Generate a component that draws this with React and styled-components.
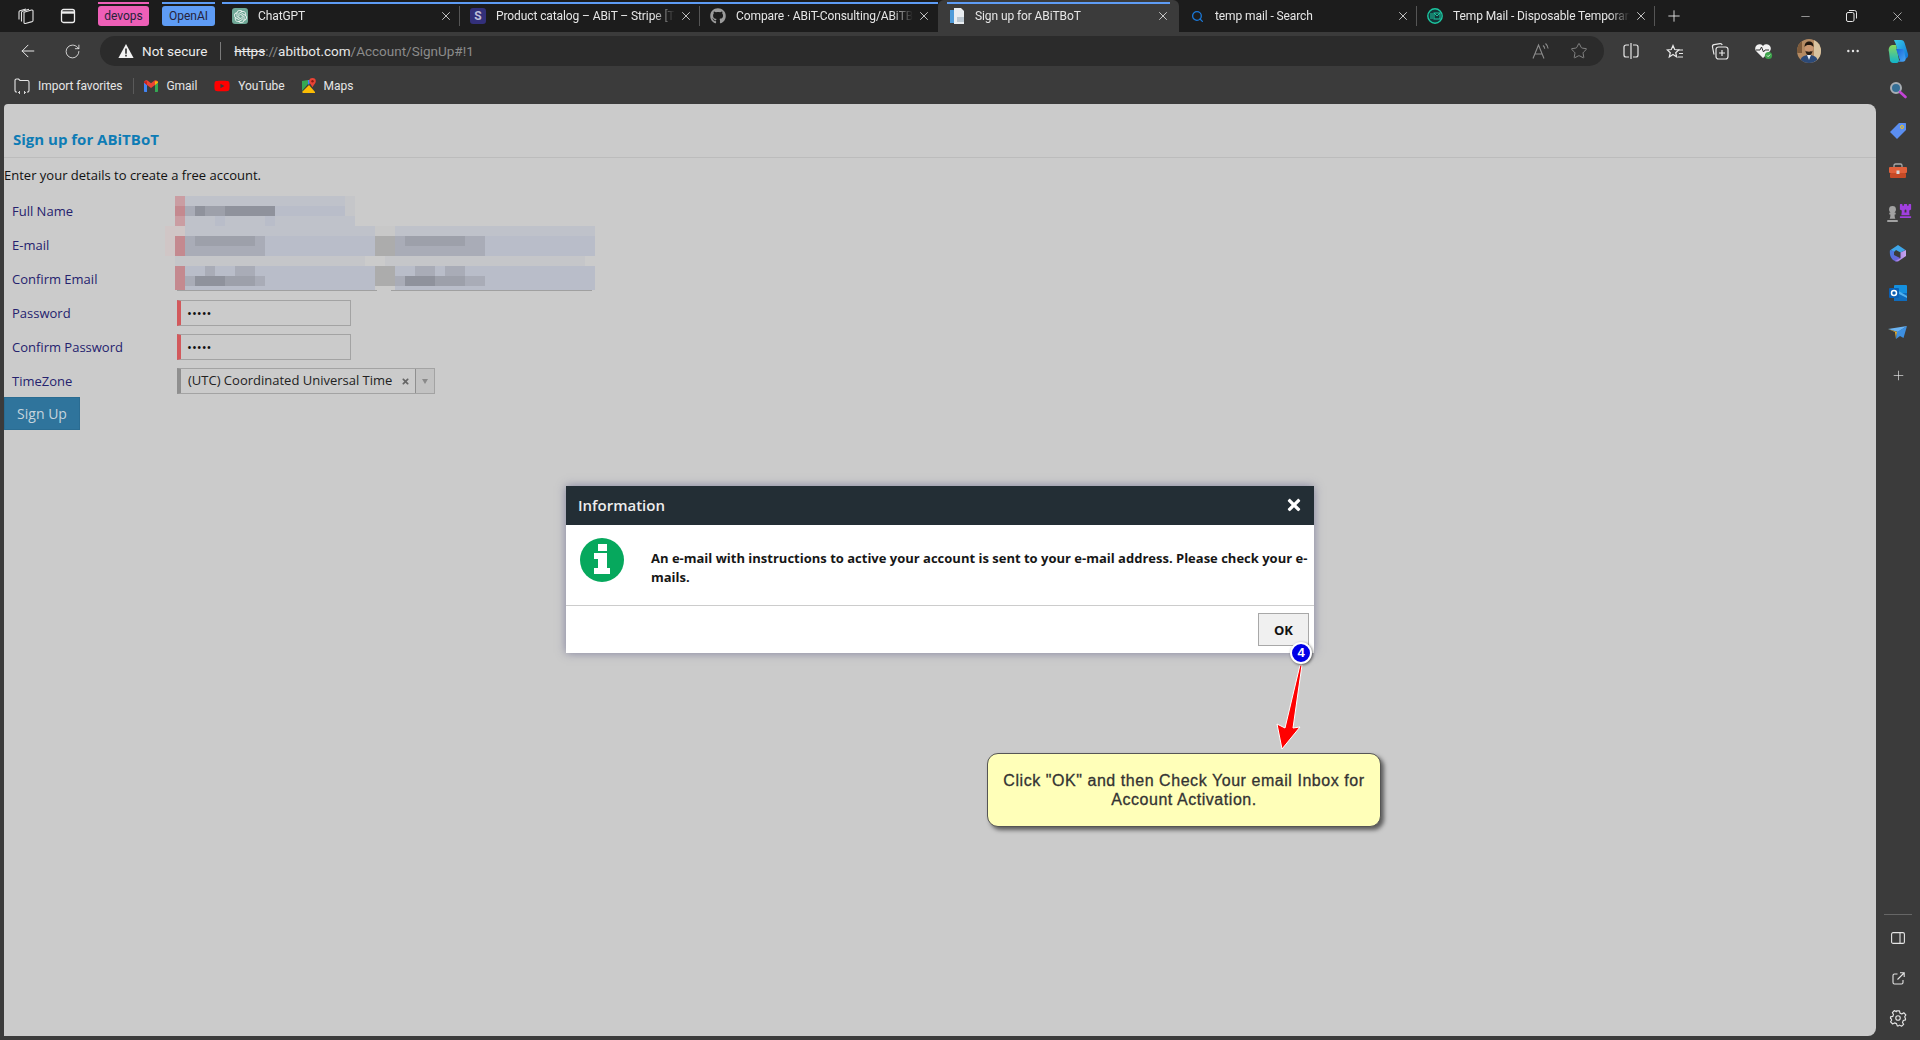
import React from 'react';
import styled, { createGlobalStyle } from 'styled-components';
import { ArrowLeft, RotateCw, Minus, Plus, X, Star, Search, MoreHorizontal } from 'lucide-react';
import { FaGithub, FaTimes, FaChessPawn, FaChessRook, FaYoutube } from 'react-icons/fa';
import { SiOpenai } from 'react-icons/si';

const GlobalStyle = createGlobalStyle`
  html, body { margin: 0; padding: 0; height: 100%; overflow: hidden; background: #3b3b3b; }
  #root { height: 100%; }
  * { box-sizing: border-box; }
`;

const Browser = styled.div`
  height: 1040px;
  display: flex;
  flex-direction: column;
  font-family: Roboto, "Liberation Sans", sans-serif;
  color: #e6e6e6;
  background: #3b3b3b;
`;

/* tab strip */
const TabStrip = styled.div`
  height: 32px;
  display: flex;
  background: #1c1c1c;
  flex-shrink: 0;
`;
const StripIcon = styled.div`
  width: ${p => p.$w}px;
  display: flex;
  align-items: center;
  justify-content: center;
  color: #e6e6e6;
`;
const GroupTag = styled.div`
  position: relative;
  width: ${p => p.$w}px;
  height: 20px;
  margin: 6px ${p => p.$mr}px 0 0;
  border-radius: 3px;
  background: ${p => p.$color};
  color: #26233a;
  font-size: 12px;
  line-height: 20px;
  text-align: center;
  &::before {
    content: '';
    position: absolute;
    left: 0;
    right: 0;
    top: -4px;
    height: 2px;
    background: ${p => p.$color};
  }
`;
const Tab = styled.div`
  position: relative;
  width: ${p => p.$w}px;
  height: ${p => (p.$active ? '36px' : '32px')};
  display: flex;
  align-items: center;
  padding: ${p => (p.$active ? '0 9px 4px 11px' : '0 7px 0 10px')};
  background: ${p => (p.$active ? '#3b3b3b' : 'transparent')};
  border-radius: 6px 6px 0 0;
  font-size: 12px;
  z-index: ${p => (p.$active ? 1 : 0)};
  ${p => p.$group && `
    &::before {
      content: '';
      position: absolute;
      left: ${p.$active ? '9px' : 0};
      right: ${p.$active ? '9px' : 0};
      top: 2px;
      height: 2px;
      background: #5e9cf5;
    }
  `}
  ${p => p.$sep && `
    &::after {
      content: '';
      position: absolute;
      right: 0;
      top: 6px;
      height: 20px;
      width: 1px;
      background: #555;
    }
  `}
`;
const TabIconBox = styled.div`
  width: 16px;
  height: 16px;
  flex-shrink: 0;
  margin-right: 10px;
  display: flex;
  align-items: center;
  justify-content: center;
  border-radius: 3px;
  background: ${p => p.$bg || 'transparent'};
  color: ${p => p.$color || '#fff'};
  font-size: 12px;
  font-weight: 700;
`;
const TabTitle = styled.div`
  flex: 1;
  min-width: 0;
  white-space: nowrap;
  overflow: hidden;
  letter-spacing: -0.1px;
  -webkit-mask-image: linear-gradient(to right, #000 88%, transparent 100%);
  mask-image: linear-gradient(to right, #000 88%, transparent 100%);
`;
const TabClose = styled.div`
  width: 14px;
  height: 14px;
  flex-shrink: 0;
  margin-left: 4px;
  display: flex;
  align-items: center;
  justify-content: center;
`;
const NewTab = styled.div`
  width: 38px;
  display: flex;
  align-items: center;
  justify-content: center;
`;
const WindowControls = styled.div`
  margin-left: auto;
  display: flex;
`;
const WinButton = styled.div`
  width: 46px;
  display: flex;
  align-items: center;
  justify-content: center;
`;

/* toolbar */
const Toolbar = styled.div`
  height: 38px;
  flex-shrink: 0;
  display: flex;
  align-items: flex-start;
  padding-top: 4px;
`;
const ToolButton = styled.div`
  width: ${p => p.$w || 44.5}px;
  height: 30px;
  margin-left: ${p => p.$ml || 0}px;
  flex-shrink: 0;
  display: flex;
  align-items: center;
  justify-content: center;
  color: #e8e8e8;
`;
const AddressBar = styled.div`
  flex: 1;
  height: 30px;
  margin: 0 4.5px 0 6px;
  display: flex;
  align-items: center;
  padding: 0 16px 0 18px;
  border-radius: 15px;
  background: #2b2b2b;
  font-size: 13.5px;
`;
const NotSecure = styled.span`
  margin-left: 8px;
  color: #ececec;
`;
const AddressDivider = styled.span`
  width: 1px;
  height: 18px;
  margin: 0 13px;
  background: #7a7a7a;
`;
const Url = styled.span`
  color: #8b8b8b;
`;
const UrlStrong = styled.span`
  color: #e8e8e8;
  text-decoration: ${p => (p.$struck ? 'line-through' : 'none')};
`;
const AddressEnd = styled.div`
  margin-left: auto;
  display: flex;
  align-items: center;
  gap: 20px;
  color: #8c8c8c;
`;

/* work area */
const WorkArea = styled.div`
  flex: 1;
  min-height: 0;
  display: flex;
`;
const MainColumn = styled.div`
  flex: 1;
  min-width: 0;
  display: flex;
  flex-direction: column;
`;
const BookmarkBar = styled.div`
  height: 34px;
  flex-shrink: 0;
  display: flex;
  align-items: center;
  padding: 0 0 2px 14px;
  font-size: 12px;
`;
const Bookmark = styled.div`
  display: flex;
  align-items: center;
  gap: ${p => p.$gap || 8}px;
  margin-right: ${p => p.$mr || 16}px;
  letter-spacing: -0.05px;
`;
const BookmarkDivider = styled.span`
  width: 1px;
  height: 16px;
  background: #5a5a5a;
  margin-right: 10px;
`;
const PageFrame = styled.div`
  flex: 1;
  min-height: 0;
  padding: 0 0 4px 4px;
`;
const Page = styled.div`
  position: relative;
  height: 100%;
  overflow: hidden;
  background: #cbcbcb;
  border-radius: 4px 8px 8px 0;
  font-family: "Open Sans", "Liberation Sans", sans-serif;
  font-size: 13px;
  color: #111;
`;
const PageHeading = styled.div`
  height: 54px;
  padding: 25px 0 0 9px;
  border-bottom: 1px solid #bcbcbc;
`;
const PageTitle = styled.h1`
  margin: 0;
  font-size: 15px;
  line-height: 20px;
  font-weight: 700;
  color: #0e7cb5;
`;
const Intro = styled.p`
  margin: 8px 0 0 0;
  line-height: 18px;
`;
const Form = styled.form`
  position: relative;
  margin-top: 10px;
`;
const FormRow = styled.div`
  height: 34px;
  display: flex;
  align-items: center;
`;
const FormLabel = styled.label`
  width: 173px;
  padding-left: 8px;
  color: #25226e;
`;
const TextField = styled.input`
  width: 174px;
  height: 26px;
  padding: 0 0 0 6px;
  border: 1px solid #a3a3a3;
  border-left: 4px solid #d2595c;
  background: transparent;
  font-family: inherit;
  font-size: 13px;
  color: #111;
  outline: none;
`;
const SelectBox = styled.div`
  width: 258px;
  height: 26px;
  display: flex;
  align-items: center;
  border: 1px solid #a3a3a3;
  border-left: 4px solid #8f8f8f;
  color: #222;
  padding-left: 7px;
`;
const SelectValue = styled.span`
  flex: 1;
  white-space: nowrap;
  padding-bottom: 2px;
`;
const SelectClear = styled.span`
  width: 14px;
  display: flex;
  color: #666;
`;
const SelectArrow = styled.span`
  width: 19px;
  height: 100%;
  display: flex;
  align-items: center;
  justify-content: center;
  border-left: 1px solid #8f8f8f;
  background: #c2c2c2;
  &::after {
    content: '';
    border-left: 3px solid transparent;
    border-right: 3px solid transparent;
    border-top: 5px solid #8a8a8a;
  }
`;
const SubmitButton = styled.button`
  display: block;
  width: 76px;
  height: 33px;
  margin-top: -1px;
  border: 1px solid #2a6c92;
  background: #2f749c;
  color: #c6d4dd;
  font-family: inherit;
  font-size: 14px;
  padding: 0;
`;
const MosaicLayer = styled.svg`
  position: absolute;
  left: 161px;
  top: 2px;
  pointer-events: none;
`;

/* dialog */
const Dialog = styled.div`
  position: absolute;
  left: 562px;
  top: 382px;
  width: 748px;
  height: 167px;
  display: flex;
  flex-direction: column;
  background: #fff;
  box-shadow: 0 0 9px rgba(70, 70, 120, 0.55);
`;
const DialogHeader = styled.div`
  height: 39px;
  flex-shrink: 0;
  display: flex;
  align-items: center;
  justify-content: space-between;
  padding: 0 11px 2px 12px;
  background: #232e35;
  color: #ededed;
  font-size: 15px;
  font-weight: 600;
`;
const DialogBody = styled.div`
  height: 80px;
  flex-shrink: 0;
  display: flex;
  padding: 13px 5px 0 14px;
  color: #161616;
`;
const DialogMessage = styled.p`
  margin: 11px 0 0 27px;
  flex: 1;
  font-size: 13px;
  line-height: 19px;
  font-weight: 700;
`;
const DialogFooter = styled.div`
  flex: 1;
  display: flex;
  justify-content: flex-end;
  padding: 7px 5px 0 0;
  border-top: 1px solid #cccccc;
`;
const OkButton = styled.button`
  width: 51px;
  height: 33px;
  padding: 0;
  border: 1px solid #a8a8a8;
  background: #f0f0f0;
  color: #111;
  font-family: inherit;
  font-size: 13px;
  font-weight: 700;
`;

/* tutorial annotation */
const StepBadge = styled.div`
  position: absolute;
  left: 1286px;
  top: 538px;
  width: 22px;
  height: 22px;
  border-radius: 50%;
  border: 2px solid #fff;
  background: #0000e6;
  color: #fff;
  font: 700 13px/18px "Liberation Sans", sans-serif;
  text-align: center;
  box-shadow: 1px 1px 3px rgba(0, 0, 0, 0.55);
`;
const ArrowLayer = styled.svg`
  position: absolute;
  left: 1265px;
  top: 556px;
  overflow: visible;
`;
const Callout = styled.div`
  position: absolute;
  left: 983px;
  top: 649px;
  width: 394px;
  height: 74px;
  display: flex;
  align-items: center;
  justify-content: center;
  padding: 0 12px;
  border: 1px solid #555;
  border-radius: 11px;
  background: #ffffb9;
  color: #333;
  font: 16px/19px "Liberation Sans", sans-serif;
  letter-spacing: 0.55px;
  text-align: center;
  -webkit-text-stroke: 0.3px #333;
  box-shadow: 3px 3px 4px rgba(0, 0, 0, 0.55);
`;

/* side rail */
const Rail = styled.div`
  width: 44px;
  flex-shrink: 0;
  display: flex;
  flex-direction: column;
  justify-content: space-between;
  padding-bottom: 2px;
`;
const RailGroup = styled.div`
  display: flex;
  flex-direction: column;
  align-items: center;
`;
const RailButton = styled.div`
  width: 44px;
  height: ${p => p.$h || 40.6}px;
  padding-bottom: ${p => p.$pb || 0}px;
  display: flex;
  align-items: center;
  justify-content: center;
  color: #e4e4e4;
`;
const RailDivider = styled.div`
  width: 28px;
  height: 1px;
  background: #666;
  margin-bottom: 3px;
`;
const PawnPiece = styled(FaChessPawn)`
  color: #a2a2a2;
  margin-top: 3px;
`;
const RookPiece = styled(FaChessRook)`
  color: #a13fe0;
  margin: -4px 0 0 -3px;
`;

const palette = {
  p: '#c4898f', q: '#ca9da2', r: '#d0c6c6', a: '#b9bdc9', b: '#bfc2ca', c: '#c5c6c9',
  d: '#a9acb7', e: '#9da0aa', f: '#8f929c', g: '#acacac', h: '#c8c8c8',
};
// one string per 10px row of the blurred fields, x starts at 165
const mosaicRows = [
  '.qbbbbbbbbbbbbbbbbc',
  '.pdfeefffff' + 'aaaaaaac',
  '.qbbbabbbbabbbbbbbb',
  'rrbbbbbbbbbbbbbbbbbbbhhbbbbbbbbbbbbbbbbbbbb',
  'rpdeeeeeed' + 'aaaaaaaaaaa' + 'gg' + 'deeeeeedd' + 'aaaaaaaaaaa',
  'rpddddddd' + 'd' + 'aaaaaaaaaaa' + 'gg' + 'ddddddddd' + 'aaaaaaaaaaa',
  '.ccccccccccccccccccc..cccccccccccccccccccc',
  '.paadaadda' + 'aaaaaaaaaaa' + 'gg' + 'aaddadda' + 'aaaaaaaaaaaa',
  '.pdfffeeed' + 'aaaaaaaaaaa' + 'gg' + 'dfffeeedd' + 'aaaaaaaaaaa',
  '.paaaaaaaaaaaaaaaaaaa..aaaaaaaaaaaaaaaaaaaa',
];

function Mosaic() {
  return (
    <MosaicLayer width="430" height="95" viewBox="0 0 430 95" shapeRendering="crispEdges" aria-hidden="true">
      {mosaicRows.map((row, y) =>
        row.split('').map((ch, x) =>
          ch === '.' ? null : (
            <rect key={`${x}-${y}`} x={x * 10} y={y * 10} width="10" height={y === 9 ? 4 : 10} fill={palette[ch]} />
          )
        )
      )}
      <rect x="12" y="94" width="200" height="1" fill="#a0a0a0" />
      <rect x="226" y="94" width="201" height="1" fill="#a0a0a0" />
    </MosaicLayer>
  );
}

function InfoBadgeIcon() {
  return (
    <svg width="44" height="44" viewBox="0 0 44 44">
      <circle cx="22" cy="22" r="22" fill="#06a85d" />
      <path d="M18 6h9v7h-9zM14 15h13v15h3v6H14v-6h4v-9h-4z" fill="#fff" />
    </svg>
  );
}
function WorkspacesIcon() {
  return (
    <svg width="18" height="18" viewBox="0 0 18 18" fill="none" stroke="#e6e6e6" strokeWidth="1.1" strokeLinejoin="round">
      <path d="M7 5.200l7.500-2.200c.8-.2 1.500.3 1.500 1.100v9.300c0 .6-.3 1-.9 1.200L8.500 16.500c-.8.2-1.500-.3-1.500-1.100z" />
      <path d="M4.500 14.500V5.500c0-.6.300-1 .9-1.200L12 2.200" />
      <path d="M2 12.500V5c0-.6.300-1 .9-1.200L9 2" />
    </svg>
  );
}
function VerticalTabsIcon() {
  return (
    <svg width="16" height="16" viewBox="0 0 16 16" fill="none" stroke="#eee" strokeWidth="1.3">
      <rect x="1.500" y="1.500" width="13" height="13" rx="2" />
      <path d="M2 4.500h12" strokeWidth="2.400" />
    </svg>
  );
}
function DocFavicon() {
  return (
    <svg width="16" height="16" viewBox="0 0 16 16">
      <path d="M1 2h6v13H1z" fill="#4f9bd9" />
      <path d="M5 0h7l3 3v13H5z" fill="#e9edf1" />
      <path d="M8 9h7v5H8z" fill="#bcc8d2" />
    </svg>
  );
}
function TempMailFavicon() {
  return (
    <svg width="16" height="16" viewBox="0 0 16 16" fill="none">
      <circle cx="8" cy="8" r="7.200" fill="#12393a" stroke="#1cc6a0" strokeWidth="1.400" />
      <path d="M3 6h3M3 8h3M3 10h3" stroke="#1cc6a0" />
      <rect x="7" y="5" width="6" height="6" stroke="#1cc6a0" />
      <path d="M7 5l3 3 3-3" stroke="#1cc6a0" />
    </svg>
  );
}
function RestoreIcon() {
  return (
    <svg width="11" height="12" viewBox="0 0 11 12" fill="none" stroke="#e6e6e6">
      <rect x="0.500" y="2.500" width="7.500" height="9" rx="1.500" />
      <path d="M3 .5h5.500a2 2 0 0 1 2 2v6" />
    </svg>
  );
}
function WarningIcon() {
  return (
    <svg width="16" height="16" viewBox="0 0 16 16">
      <path d="M8 1l7.600 14H.4z" fill="#f2f2f2" />
      <path d="M7.200 5.500h1.600v5.300H7.200zM7.200 11.800h1.600v1.600H7.200z" fill="#2b2b2b" />
    </svg>
  );
}
function ReadAloudIcon() {
  return (
    <svg width="18" height="18" viewBox="0 0 18 18" fill="none" stroke="#8c8c8c" strokeWidth="1.100">
      <path d="M1 16.500L6.500 3l5.500 13.500M3 12h7" />
      <path d="M11 3.500c1 .8 1.600 2 1.700 3.300M13.500 1.500c1.500 1.300 2.400 3 2.600 5" />
    </svg>
  );
}
function SplitIcon() {
  return (
    <svg width="16" height="18" viewBox="0 0 16 18" fill="none" stroke="#e8e8e8" strokeWidth="1.200">
      <path d="M6 3H3a2 2 0 0 0-2 2v8a2 2 0 0 0 2 2h3M10 3h3a2 2 0 0 1 2 2v8a2 2 0 0 1-2 2h-3M8 1v16" />
    </svg>
  );
}
function FavoritesIcon() {
  return (
    <svg width="18" height="18" viewBox="0 0 18 18" fill="none" stroke="#e8e8e8" strokeWidth="1.200">
      <path d="M7 2l1.700 4 4 .4-3 2.800 1 4.300L7 11l-3.700 2.500 1-4.300-3-2.800 4-.4z" transform="translate(0 1.500)" />
      <path d="M12 8h5M13 11.500h4M12 15h5" />
    </svg>
  );
}
function CollectionsIcon() {
  return (
    <svg width="18" height="18" viewBox="0 0 18 18" fill="none" stroke="#e8e8e8" strokeWidth="1.200">
      <path d="M3 12.500L1.500 5a2 2 0 0 1 1.600-2.300L9 1.600a2 2 0 0 1 2.200 1.400" />
      <rect x="5" y="5" width="12" height="12" rx="2.500" />
      <path d="M11 8v6M8 11h6" />
    </svg>
  );
}
function HealthIcon() {
  return (
    <svg width="20" height="20" viewBox="0 0 20 20">
      <path d="M9 17L2 10a4.200 4.200 0 0 1 7-5 4.200 4.200 0 0 1 7 5z" fill="#f2f2f2" />
      <path d="M2 9h4l1.500-3 2 5 1.500-2h4" fill="none" stroke="#333" strokeWidth="1" />
      <circle cx="14.500" cy="14.500" r="3.600" fill="#3da34b" />
      <path d="M13 14.500l1.100 1.100 2-2" fill="none" stroke="#fff" strokeWidth=".9" />
    </svg>
  );
}
function Avatar() {
  return (
    <svg width="24" height="24" viewBox="0 0 24 24">
      <defs>
        <clipPath id="avatarClip"><circle cx="12" cy="12" r="12" /></clipPath>
      </defs>
      <g clipPath="url(#avatarClip)">
        <rect width="24" height="24" fill="#b48a62" />
        <rect x="17" width="7" height="24" fill="#d8c3a0" />
        <rect width="5" height="14" fill="#7d5a3a" />
        <path d="M3 24c0-6 4-8 9-8s9 2 9 8z" fill="#2c4a78" />
        <path d="M10 16l2 5 2-5z" fill="#e9eef5" />
        <ellipse cx="12" cy="10" rx="4.200" ry="5.400" fill="#c99670" />
        <path d="M7.600 8c0-4 2-5.500 4.600-5.500S16.600 4 16.400 8c-1-1.600-2-2-4.400-2s-3.400.5-4.400 2z" fill="#20170f" />
        <path d="M8.300 11.500c.6 3.600 2 4.600 3.700 4.600s3-1 3.700-4.600c-1 1.600-6.400 1.600-7.400 0z" fill="#2a1f16" />
      </g>
    </svg>
  );
}
function CopilotIcon() {
  return (
    <svg width="26" height="26" viewBox="0 0 26 26">
      <defs>
        <linearGradient id="copA" x1="0" y1="0" x2="1" y2="1">
          <stop offset="0" stopColor="#39d0e8" />
          <stop offset="1" stopColor="#0f6fd6" />
        </linearGradient>
        <linearGradient id="copB" x1="0" y1="0" x2="1" y2="1">
          <stop offset="0" stopColor="#1565d8" />
          <stop offset="1" stopColor="#4aa8f5" />
        </linearGradient>
        <linearGradient id="copC" x1="0" y1="0" x2="0" y2="1">
          <stop offset="0" stopColor="#8ad858" />
          <stop offset="1" stopColor="#10b4cc" />
        </linearGradient>
      </defs>
      <path d="M9 2h7c2 0 3 1 3.600 3l3.400 11c.7 2.500-1 5-3.500 5h-5L11 7c-.5-2-1.500-3.500-2-5z" fill="url(#copA)" />
      <path d="M4 14c-1-3 .5-7 3.500-7H11l3 15c.2 1.500-.8 3-2.500 3H8c-1.500 0-2.500-1-3-2.500z" fill="url(#copC)" />
      <path d="M11 11h6c1 0 1.800.6 2 1.600l1.600 7.400c.4 2-.8 3.800-3 3.800H13c1.500-.6 2-1.800 1.800-3z" fill="url(#copB)" />
    </svg>
  );
}
function ImportIcon() {
  return (
    <svg width="16" height="16" viewBox="0 0 16 16" fill="none" stroke="#e6e6e6" strokeWidth="1.100">
      <path d="M3 14H2.500A1.500 1.500 0 0 1 1 12.500v-10A1.500 1.500 0 0 1 2.500 1h2l1.500 1.500h7.500A1.500 1.500 0 0 1 15 4v8.500A1.500 1.500 0 0 1 13.500 14H13" />
      <path d="M6 14.500H4.500m0 0L6 13m-1.500 1.500L6 16M10 14.500h1.500m0 0L10 13m1.500 1.500L10 16" strokeWidth=".9" />
    </svg>
  );
}
function GmailIcon() {
  return (
    <svg width="14" height="12" viewBox="0 0 14 12">
      <path d="M0 2v9c0 .6.400 1 1 1h2V5z" fill="#4285f4" />
      <path d="M14 2v9c0 .6-.4 1-1 1h-2V5z" fill="#34a853" />
      <path d="M0 2.500C0 .6 2 -.5 3.500.6L7 3.300 10.500.6C12-.5 14 .6 14 2.500L11 5 7 8 3 5z" fill="#ea4335" />
      <path d="M11 1.200l3 .3v1L11 5z" fill="#fbbc04" />
      <path d="M0 1.500l3-.3V5L0 2.500z" fill="#c5221f" />
    </svg>
  );
}
function MapsIcon() {
  return (
    <svg width="14" height="16" viewBox="0 0 14 16">
      <path d="M0 3l6-1v4L0 13z" fill="#34a853" />
      <path d="M0 14l7-7 6 7v1H1z" fill="#fbbc04" />
      <path d="M6 2h3L7 7 6 6z" fill="#4285f4" />
      <path d="M10.500 0a3.300 3.300 0 0 1 3.300 3.300c0 2-2 3.300-3.300 6-1.300-2.700-3.300-4-3.300-6A3.300 3.300 0 0 1 10.500 0z" fill="#ea4335" />
      <circle cx="10.500" cy="3.300" r="1.200" fill="#8c1a12" />
    </svg>
  );
}
function RailSearchIcon() {
  return (
    <svg width="18" height="18" viewBox="0 0 18 18" fill="none">
      <circle cx="7" cy="7" r="5" fill="#356f96" stroke="#a8aeb4" strokeWidth="2" />
      <path d="M11 11l5.500 5" stroke="#c443d6" strokeWidth="2.600" strokeLinecap="round" />
    </svg>
  );
}
function RailTagIcon() {
  return (
    <svg width="18" height="18" viewBox="0 0 18 18">
      <path d="M10 1h6c.6 0 1 .4 1 1v6L8 17 1 10z" fill="#5b8ef0" />
      <circle cx="13" cy="5" r="1.500" fill="none" stroke="#f5c518" />
    </svg>
  );
}
function RailToolboxIcon() {
  return (
    <svg width="20" height="16" viewBox="0 0 20 16">
      <path d="M6 4V2.500C6 1.500 7 1 7.500 1h5c.5 0 1.500.5 1.500 1.500V4" fill="none" stroke="#a8a8a8" strokeWidth="1.300" />
      <rect x="1" y="4" width="18" height="6" rx="1" fill="#e2603a" />
      <rect x="2" y="10" width="16" height="5" rx="1" fill="#c64a26" />
      <rect x="8.500" y="7.500" width="3" height="3.500" fill="#d8d8d8" />
    </svg>
  );
}
function RailOfficeIcon() {
  return (
    <svg width="18" height="18" viewBox="0 0 18 18">
      <defs>
        <linearGradient id="offA" x1="0" y1="0" x2="1" y2="1">
          <stop offset="0" stopColor="#3f7fe0" />
          <stop offset="1" stopColor="#7a5ad8" />
        </linearGradient>
        <linearGradient id="offB" x1="0" y1="0" x2="1" y2="0">
          <stop offset="0" stopColor="#9a78e8" />
          <stop offset="1" stopColor="#c7a5ef" />
        </linearGradient>
      </defs>
      <path d="M9 1l7.500 5-5 2.500L7 6 5 8 1.500 6z" fill="#3ea6e8" />
      <path d="M1 6c-.5 4 0 7 3 10l3 1.500L11 14 5 11V7z" fill="url(#offA)" />
      <path d="M17 6v6l-8 5.500c-1 .3-2 0-3-.5l5.500-3V8.500z" fill="url(#offB)" />
    </svg>
  );
}
function RailOutlookIcon() {
  return (
    <svg width="18" height="18" viewBox="0 0 18 18">
      <rect x="5" y="1" width="13" height="16" rx="1" fill="#1490df" />
      <path d="M5 9h13v8H5z" fill="#0f6cbd" />
      <path d="M8 6l10 6v2L8 9z" fill="#50b0ec" />
      <rect y="4" width="10" height="10" rx="1" fill="#0a5fb4" />
      <circle cx="5" cy="9" r="2.500" fill="none" stroke="#fff" strokeWidth="1.500" />
    </svg>
  );
}
function RailSendIcon() {
  return (
    <svg width="20" height="16" viewBox="0 0 20 16">
      <path d="M0 3l19-3-9 6z" fill="#6bb4f2" />
      <path d="M0 3l7 3 1 7 1-7z" fill="#f0b429" />
      <path d="M19 0L9 6l-1 7 4-3 3.500 2z" fill="#3d8fe0" />
    </svg>
  );
}
function PanelIcon() {
  return (
    <svg width="14" height="12" viewBox="0 0 14 12" fill="none" stroke="#e4e4e4" strokeWidth="1.100">
      <rect x=".6" y=".6" width="12.800" height="10.800" rx="1.500" />
      <path d="M9 .6v10.800" />
    </svg>
  );
}
function ExternalIcon() {
  return (
    <svg width="13" height="13" viewBox="0 0 13 13" fill="none" stroke="#e4e4e4" strokeWidth="1.100">
      <path d="M5.500 2H2.500A1.500 1.500 0 0 0 1 3.500v7A1.500 1.500 0 0 0 2.500 12h7a1.500 1.500 0 0 0 1.500-1.500V8" />
      <path d="M5.500 7.500L12 1M8 .8h4.200V5" />
    </svg>
  );
}
function GearIcon() {
  return (
    <svg width="18" height="18" viewBox="0 0 24 24" fill="none" stroke="#e4e4e4" strokeWidth="1.500" strokeLinejoin="round">
      <path d="M10 2h4l.6 3 2.500 1.100 2.600-1.600 2.800 2.800-1.600 2.600L22 12.500V14l-3 .9-1 2.500 1.500 2.600-2.800 2.500-2.600-1.500L12.500 22h-1.500l-1-3-2.500-1-2.600 1.500-2.800-2.800 1.500-2.500L2.500 12H2v-2l3-.6 1-2.500L4.500 4.300 7.300 1.500l2.500 1.600z" transform="translate(0 .5)" />
      <circle cx="12" cy="12" r="3" />
    </svg>
  );
}

const tabs = [
  { title: 'ChatGPT', w: 238, group: true, sep: true, icon: <TabIconBox $bg="#6fa896" $color="#eef5f2"><SiOpenai size={13} /></TabIconBox> },
  { title: 'Product catalog – ABiT – Stripe [Test]', w: 240, group: true, sep: true, icon: <TabIconBox $bg="#33307a" $color="#bdbdd8">S</TabIconBox> },
  { title: 'Compare · ABiT-Consulting/ABiTBoT', w: 238, group: true, icon: <TabIconBox $color="#9b9b9b"><FaGithub size={16} /></TabIconBox> },
  { title: 'Sign up for ABiTBoT', w: 241, group: true, active: true, icon: <TabIconBox><DocFavicon /></TabIconBox> },
  { title: 'temp mail - Search', w: 238, sep: true, icon: <TabIconBox $color="#1a78d8"><Search size={13} strokeWidth={2.4} /></TabIconBox> },
  { title: 'Temp Mail - Disposable Temporary Email', w: 238, sep: true, icon: <TabIconBox><TempMailFavicon /></TabIconBox> },
];

export default function App() {
  return (
    <>
      <GlobalStyle />
      <Browser>
        <TabStrip>
          <StripIcon $w={52}><WorkspacesIcon /></StripIcon>
          <StripIcon $w={32}><VerticalTabsIcon /></StripIcon>
          <StripIcon $w={14} />
          <GroupTag $w={51} $mr={13} $color="#ee5fb7">devops</GroupTag>
          <GroupTag $w={53} $mr={7} $color="#5e9cf5">OpenAI</GroupTag>
          {tabs.map(t => (
            <Tab key={t.title} $w={t.w} $active={t.active} $group={t.group} $sep={t.sep}>
              {t.icon}
              <TabTitle>{t.title}</TabTitle>
              <TabClose><X size={14} strokeWidth={1.4} /></TabClose>
            </Tab>
          ))}
          <NewTab><Plus size={18} strokeWidth={1.2} /></NewTab>
          <WindowControls>
            <WinButton><Minus size={13} strokeWidth={1.1} /></WinButton>
            <WinButton><RestoreIcon /></WinButton>
            <WinButton><X size={15} strokeWidth={1.1} /></WinButton>
          </WindowControls>
        </TabStrip>

        <Toolbar>
          <ToolButton $w={44} $ml={6}><ArrowLeft size={20} strokeWidth={1.2} /></ToolButton>
          <ToolButton $w={44}><RotateCw size={17} strokeWidth={1.2} /></ToolButton>
          <AddressBar>
            <WarningIcon />
            <NotSecure>Not secure</NotSecure>
            <AddressDivider />
            <Url><UrlStrong $struck>https</UrlStrong>://<UrlStrong>abitbot.com</UrlStrong>/Account/SignUp#!1</Url>
            <AddressEnd>
              <ReadAloudIcon />
              <Star size={18} strokeWidth={1.2} />
            </AddressEnd>
          </AddressBar>
          <ToolButton><SplitIcon /></ToolButton>
          <ToolButton><FavoritesIcon /></ToolButton>
          <ToolButton><CollectionsIcon /></ToolButton>
          <ToolButton><HealthIcon /></ToolButton>
          <ToolButton><Avatar /></ToolButton>
          <ToolButton><MoreHorizontal size={16} strokeWidth={1.6} /></ToolButton>
          <ToolButton><CopilotIcon /></ToolButton>
        </Toolbar>

        <WorkArea>
          <MainColumn>
            <BookmarkBar>
              <Bookmark $mr={11}><ImportIcon />Import favorites</Bookmark>
              <BookmarkDivider />
              <Bookmark $mr={17}><GmailIcon />Gmail</Bookmark>
              <Bookmark $mr={17}><FaYoutube size={16} color="#f00" />YouTube</Bookmark>
              <Bookmark><MapsIcon />Maps</Bookmark>
            </BookmarkBar>
            <PageFrame>
              <Page>
                <PageHeading>
                  <PageTitle>Sign up for ABiTBoT</PageTitle>
                </PageHeading>
                <Intro>Enter your details to create a free account.</Intro>
                <Form onSubmit={e => e.preventDefault()}>
                  <Mosaic />
                  <FormRow><FormLabel>Full Name</FormLabel></FormRow>
                  <FormRow><FormLabel>E-mail</FormLabel></FormRow>
                  <FormRow><FormLabel>Confirm Email</FormLabel></FormRow>
                  <FormRow>
                    <FormLabel>Password</FormLabel>
                    <TextField type="password" readOnly value="12345" />
                  </FormRow>
                  <FormRow>
                    <FormLabel>Confirm Password</FormLabel>
                    <TextField type="password" readOnly value="12345" />
                  </FormRow>
                  <FormRow>
                    <FormLabel>TimeZone</FormLabel>
                    <SelectBox>
                      <SelectValue>(UTC) Coordinated Universal Time</SelectValue>
                      <SelectClear><FaTimes size={9} /></SelectClear>
                      <SelectArrow />
                    </SelectBox>
                  </FormRow>
                  <SubmitButton type="submit">Sign Up</SubmitButton>
                </Form>

                <Dialog>
                  <DialogHeader>
                    Information
                    <FaTimes size={18} color="#fff" />
                  </DialogHeader>
                  <DialogBody>
                    <InfoBadgeIcon />
                    <DialogMessage>
                      An e-mail with instructions to active your account is sent to your e-mail address. Please check your e-mails.
                    </DialogMessage>
                  </DialogBody>
                  <DialogFooter>
                    <OkButton type="button">OK</OkButton>
                  </DialogFooter>
                </Dialog>

                <ArrowLayer width="44" height="94" viewBox="0 0 44 94" aria-hidden="true">
                  <path d="M33 5L24 68l7-1-18 22-5-25 8 4L31 5z" fill="#f00" stroke="#fff" strokeWidth="1" />
                </ArrowLayer>
                <StepBadge>4</StepBadge>
                <Callout>Click "OK" and then Check Your email Inbox for Account Activation.</Callout>
              </Page>
            </PageFrame>
          </MainColumn>

          <Rail>
            <RailGroup>
              <RailButton><RailSearchIcon /></RailButton>
              <RailButton><RailTagIcon /></RailButton>
              <RailButton><RailToolboxIcon /></RailButton>
              <RailButton><PawnPiece size={17} /><RookPiece size={15} /></RailButton>
              <RailButton><RailOfficeIcon /></RailButton>
              <RailButton><RailOutlookIcon /></RailButton>
              <RailButton><RailSendIcon /></RailButton>
              <RailButton $h={44} $pb={2}><Plus size={15} strokeWidth={1.1} /></RailButton>
            </RailGroup>
            <RailGroup>
              <RailDivider />
              <RailButton $h={40}><PanelIcon /></RailButton>
              <RailButton $h={40}><ExternalIcon /></RailButton>
              <RailButton $h={40}><GearIcon /></RailButton>
            </RailGroup>
          </Rail>
        </WorkArea>
      </Browser>
    </>
  );
}
